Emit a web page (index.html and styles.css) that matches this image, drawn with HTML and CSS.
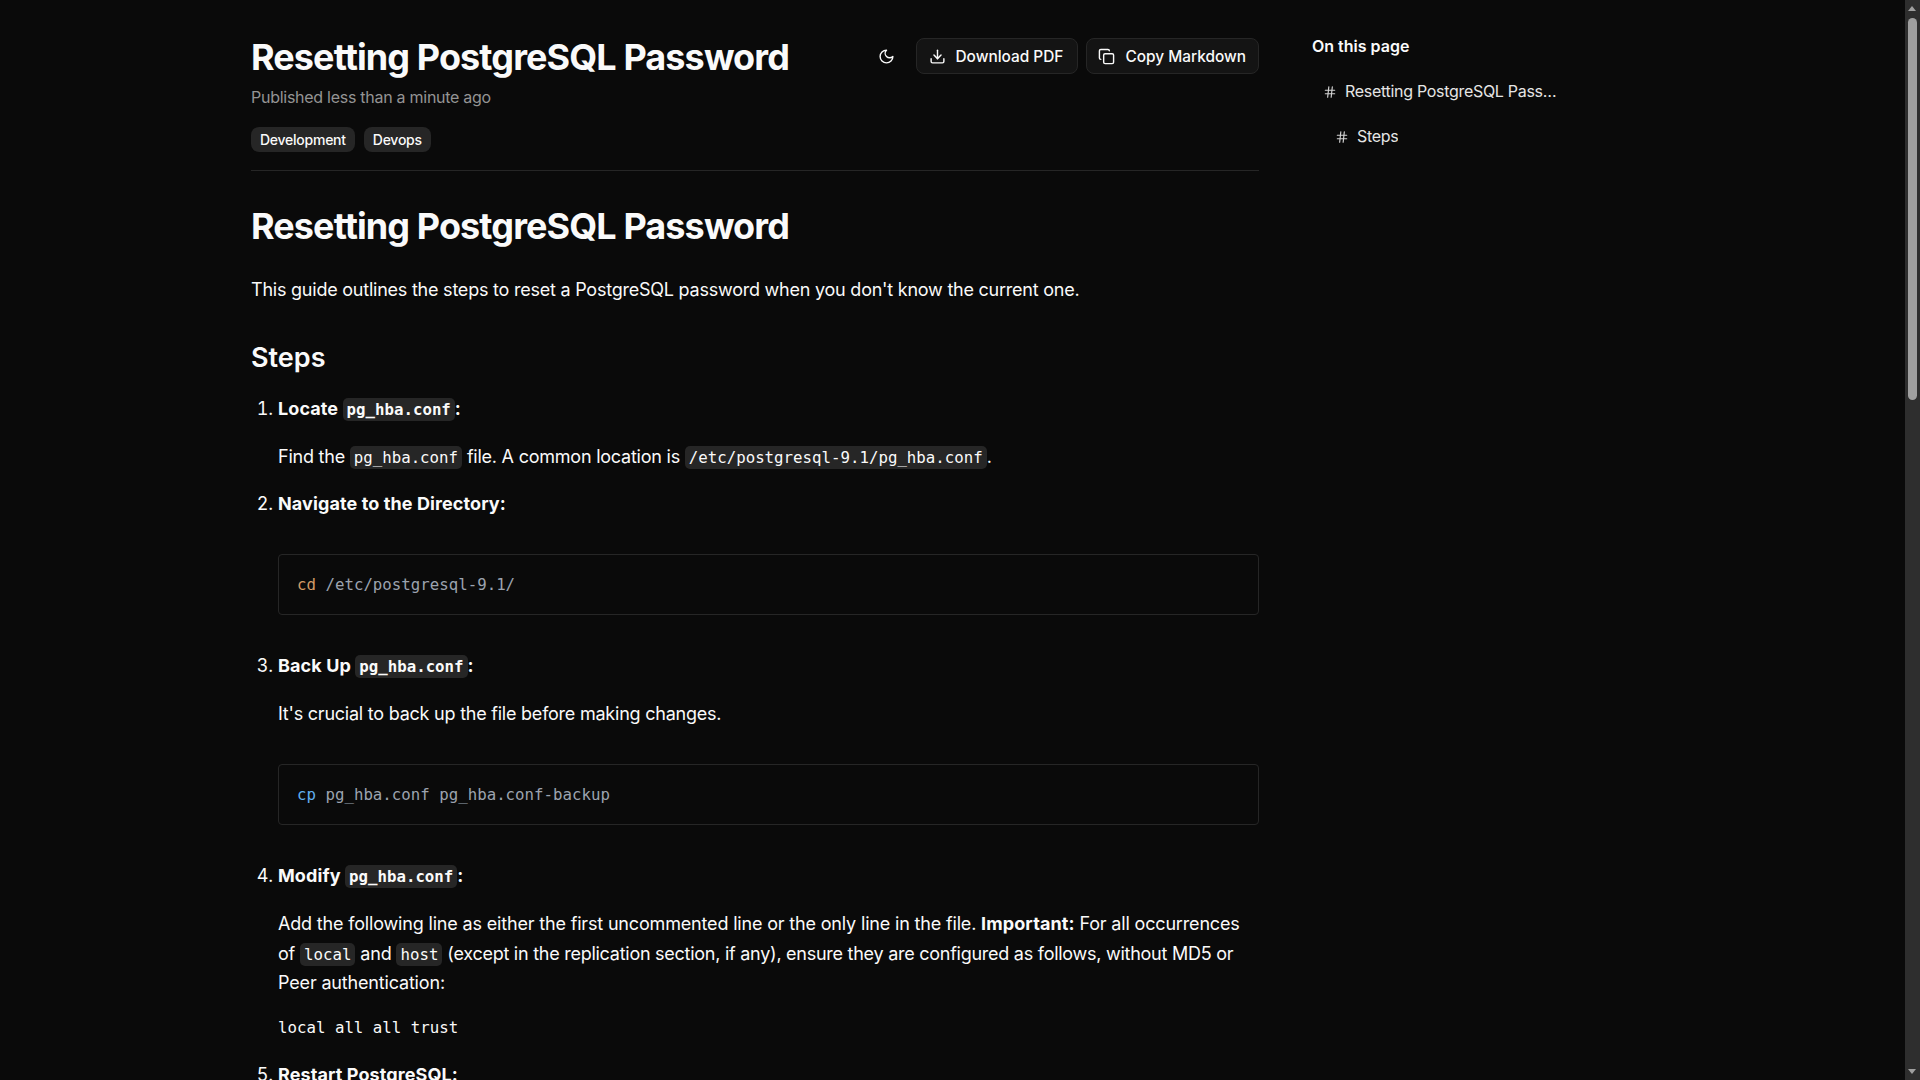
FILE: index.html
```html
<!DOCTYPE html>
<html lang="en">
<head>
    <meta charset="UTF-8">
    <meta name="viewport" content="width=device-width, initial-scale=1.0">
    <title>Resetting PostgreSQL Password</title>
    <link rel="stylesheet" href="styles.css">
</head>
<body>
    <div class="page">
        <main class="article">
            <header class="article-header">
                <div class="title-row">
                    <div>
                        <div class="page-title">Resetting PostgreSQL Password</div>
                        <div class="published">Published less than a minute ago</div>
                    </div>
                    <div class="actions">
                        <span class="theme-toggle">
                            <svg class="icon" viewBox="0 0 24 24"><path d="M12 3a6 6 0 0 0 9 9 9 9 0 1 1-9-9Z"/></svg>
                        </span>
                        <button class="action-button download-button">
                            <svg class="icon" viewBox="0 0 24 24"><path d="M21 15v4a2 2 0 0 1-2 2H5a2 2 0 0 1-2-2v-4"/><polyline points="7 10 12 15 17 10"/><line x1="12" y1="15" x2="12" y2="3"/></svg>
                            Download PDF
                        </button>
                        <button class="action-button copy-button">
                            <svg class="icon" viewBox="0 0 24 24"><rect x="8" y="8" width="14" height="14" rx="2"/><path d="M4 16c-1.1 0-2-.9-2-2V4c0-1.1.9-2 2-2h10c1.1 0 2 .9 2 2"/></svg>
                            Copy Markdown
                        </button>
                    </div>
                </div>
                <div class="tags">
                    <span class="tag">Development</span>
                    <span class="tag">Devops</span>
                </div>
            </header>

            <article class="prose">
                <h1>Resetting PostgreSQL Password</h1>
                <p class="intro">This guide outlines the steps to reset a PostgreSQL password when you don't know the current one.</p>
                <h2>Steps</h2>
                <ol>
                    <li>
                        <p class="step-title"><strong>Locate <code>pg_hba.conf</code>:</strong></p>
                        <p>Find the <code>pg_hba.conf</code> file. A common location is <code>/etc/postgresql-9.1/pg_hba.conf</code>.</p>
                    </li>
                    <li>
                        <p class="step-title"><strong>Navigate to the Directory:</strong></p>
                        <pre><span class="cmd-orange">cd</span> /etc/postgresql-9.1/</pre>
                    </li>
                    <li>
                        <p class="step-title"><strong>Back Up <code>pg_hba.conf</code>:</strong></p>
                        <p class="step-body">It's crucial to back up the file before making changes.</p>
                        <pre><span class="cmd-blue">cp</span> pg_hba.conf pg_hba.conf-backup</pre>
                    </li>
                    <li>
                        <p class="step-title"><strong>Modify <code>pg_hba.conf</code>:</strong></p>
                        <p class="step-body long-step">Add the following line as either the first uncommented line or the only line in the file. <strong>Important:</strong> For all occurrences of <code>local</code> and <code>host</code> <span class="tight">(except in the replication section, if any), ensure they are configured as follows, without MD5 or</span> Peer authentication:</p>
                        <div class="plain-code">local all all trust</div>
                    </li>
                    <li>
                        <p class="step-title"><strong>Restart PostgreSQL:</strong></p>
                    </li>
                </ol>
            </article>
        </main>

        <aside class="toc">
            <div class="toc-title">On this page</div>
            <a class="toc-item">
                <svg class="hash" viewBox="0 0 24 24"><line x1="4" y1="9" x2="20" y2="9"/><line x1="4" y1="15" x2="20" y2="15"/><line x1="10" y1="3" x2="8" y2="21"/><line x1="16" y1="3" x2="14" y2="21"/></svg>
                <span class="toc-text">Resetting PostgreSQL Password</span>
            </a>
            <a class="toc-item toc-sub">
                <svg class="hash" viewBox="0 0 24 24"><line x1="4" y1="9" x2="20" y2="9"/><line x1="4" y1="15" x2="20" y2="15"/><line x1="10" y1="3" x2="8" y2="21"/><line x1="16" y1="3" x2="14" y2="21"/></svg>
                <span class="toc-text">Steps</span>
            </a>
        </aside>

        <div class="scrollbar">
            <span class="arrow-up"></span>
            <span class="thumb"></span>
            <span class="arrow-down"></span>
        </div>
    </div>
</body>
</html>
```

FILE: styles.css
```css
html, body {
    margin: 0;
    height: 100%;
    overflow: hidden;
}

body {
    background-color: #0a0a0a;
    color: #fafafa;
    font-family: Inter, "Noto Sans", sans-serif;
    font-size: 18px;
}

.page {
    display: flex;
    height: 100vh;
    overflow: hidden;
    padding-left: 251px;
}

.article {
    width: 1008px;
    flex-shrink: 0;
}

.article-header {
    padding-top: 34px;
    padding-bottom: 18px;
    border-bottom: 1px solid #262626;
}

.title-row {
    display: flex;
    justify-content: space-between;
    align-items: flex-start;
}

.page-title {
    font-size: 36px;
    font-weight: 700;
    line-height: 46px;
    letter-spacing: -0.9px;
}

.published {
    margin-top: 5px;
    font-size: 16px;
    line-height: 24px;
    letter-spacing: -0.27px;
    color: #949494;
}

.actions {
    display: flex;
    align-items: center;
    gap: 8px;
    margin-top: 4px;
}

.theme-toggle {
    display: flex;
    align-items: center;
    justify-content: center;
    width: 36px;
    height: 36px;
    margin-right: 3px;
}

.icon {
    width: 17px;
    height: 17px;
    fill: none;
    stroke: #fafafa;
    stroke-width: 2;
    stroke-linecap: round;
    stroke-linejoin: round;
    flex-shrink: 0;
}

.action-button {
    display: flex;
    align-items: center;
    gap: 10px;
    height: 36px;
    padding: 0 12px;
    background-color: #141414;
    border: 1px solid #262626;
    border-radius: 8px;
    color: #fafafa;
    font-family: inherit;
    font-size: 15.4px;
    font-weight: 500;
}

.download-button {
    padding-right: 14px;
}

.copy-button {
    padding-left: 11px;
}

.tags {
    display: flex;
    gap: 9px;
    margin-top: 18px;
}

.tag {
    padding: 0 9px;
    height: 25px;
    line-height: 25px;
    background-color: #262626;
    border-radius: 8px;
    font-size: 14px;
    font-weight: 500;
    letter-spacing: -0.25px;
}

.prose h1 {
    margin: 32px 0 0;
    font-size: 36px;
    font-weight: 700;
    line-height: 46px;
    letter-spacing: -0.9px;
}

.prose p {
    margin: 0;
    line-height: 29.25px;
    letter-spacing: -0.23px;
}

.prose .long-step {
    letter-spacing: -0.17px;
}

.prose .tight {
    letter-spacing: -0.26px;
}

.prose .intro {
    margin-top: 26px;
}

.prose h2 {
    margin: 35px 0 0;
    font-size: 27px;
    font-weight: 600;
    line-height: 38px;
}

.prose ol {
    margin: 17px 0 0;
    padding-left: 27px;
}

.prose li {
    margin-bottom: 18px;
    line-height: 29.25px;
}

.prose li > p + p {
    margin-top: 18.5px;
}

.prose li > p + .step-body {
    margin-top: 19.5px;
}

.prose strong {
    font-weight: 700;
    letter-spacing: 0.1px;
}

code {
    padding: 2px 4px;
    background-color: #262626;
    border-radius: 5px;
    font-family: "DejaVu Sans Mono", monospace;
    font-size: 15.75px;
    line-height: 1;
    letter-spacing: 0;
}

pre {
    margin: 35.5px 0;
    padding: 0 18px;
    height: 59px;
    line-height: 59px;
    border: 1px solid #262626;
    border-radius: 4px;
    color: #9ca3af;
    font-family: "DejaVu Sans Mono", monospace;
    font-size: 15.75px;
}

.cmd-orange {
    color: #d19a66;
}

.cmd-blue {
    color: #61afef;
}

.plain-code {
    margin-top: 17px;
    font-family: "DejaVu Sans Mono", monospace;
    font-size: 15.75px;
    line-height: 28px;
}

.toc {
    width: 245px;
    margin-left: 53px;
    padding-top: 34px;
    font-size: 16px;
}

.toc-title {
    font-weight: 600;
    line-height: 24px;
}

.toc-item {
    display: flex;
    align-items: center;
    gap: 8px;
    margin-top: 21px;
    padding-left: 11px;
    line-height: 24px;
    letter-spacing: -0.3px;
    color: #e5e5e5;
}

.toc-sub {
    padding-left: 23px;
}

.hash {
    width: 14px;
    height: 14px;
    margin-top: 2px;
    fill: none;
    stroke: #d4d4d4;
    stroke-width: 2;
    stroke-linecap: round;
    flex-shrink: 0;
}

.toc-text {
    overflow: hidden;
    white-space: nowrap;
    text-overflow: ellipsis;
}

.scrollbar {
    position: fixed;
    top: 0;
    right: 0;
    bottom: 0;
    width: 15px;
    background-color: #2e2e2e;
}

.thumb {
    position: absolute;
    top: 18px;
    left: 3px;
    width: 9px;
    height: 382px;
    background-color: #9f9f9f;
    border-radius: 5px;
}

.arrow-up,
.arrow-down {
    position: absolute;
    left: 3px;
    width: 0;
    height: 0;
    border-left: 4.5px solid transparent;
    border-right: 4.5px solid transparent;
}

.arrow-up {
    top: 6px;
    border-bottom: 5px solid #9f9f9f;
}

.arrow-down {
    bottom: 6px;
    border-top: 5px solid #9f9f9f;
}
```
